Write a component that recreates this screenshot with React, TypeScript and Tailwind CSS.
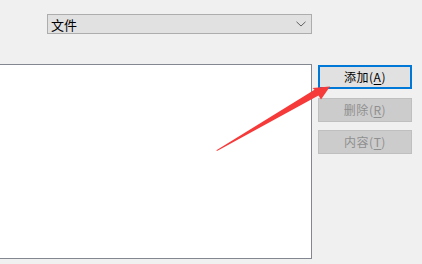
import React from "react";

const font = { fontFamily: '"Noto Sans CJK SC", "Microsoft YaHei", sans-serif' };

function Btn({ label, acc, disabled, focused, className }: { label: string; acc: string; disabled?: boolean; focused?: boolean; className?: string }) {
  const base = "w-[94px] h-[24px] flex items-center justify-center text-[12px] leading-none";
  const look = focused
    ? "border-2 border-[#0078d7] bg-[#e1e1e1] text-black"
    : disabled
    ? "border border-[#bfbfbf] bg-[#cccccc] text-[#8f8f8f]"
    : "border border-[#adadad] bg-[#e1e1e1] text-black";
  return (
    <div className={`${base} ${look} ${className ?? ""}`} style={font}>
      <span className="tracking-[0.5px]">
        {label}(<span className="underline underline-offset-2">{acc}</span>)
      </span>
    </div>
  );
}

export default function App() {
  return (
    <div className="relative w-[422px] h-[264px] bg-[#f0f0f0] overflow-hidden" style={font}>
      <div className="pt-[14px] pl-[47px]">
        <div className="w-[265px] h-[20px] border border-[#adadad] bg-[#e1e1e1] flex items-center justify-between pl-[3px] pr-[5px]">
          <span className="text-[13px] leading-none text-black">文件</span>
          <svg width="10" height="6" viewBox="0 0 10 6">
            <path d="M0.5 0.8 L5 5 L9.5 0.8" fill="none" stroke="#606060" strokeWidth="1" />
          </svg>
        </div>
      </div>
      <div className="mt-[30px] flex">
        <div className="w-[312px] h-[195px] bg-white border border-l-0 border-[#828790]" />
        <div className="ml-[6px] flex flex-col">
          <Btn label="添加" acc="A" focused className="mt-[1px]" />
          <Btn label="删除" acc="R" disabled className="mt-[9px]" />
          <Btn label="内容" acc="T" disabled className="mt-[8px]" />
        </div>
      </div>
      <svg className="absolute left-0 top-0 pointer-events-none" width="422" height="264" viewBox="0 0 422 264">
        <polygon
          points="216,150.5 314.5,89.8 312.5,88 330,86.5 321,99.5 318.5,95.5 217.5,150.8"
          fill="#f63a3a"
        />
      </svg>
    </div>
  );
}
